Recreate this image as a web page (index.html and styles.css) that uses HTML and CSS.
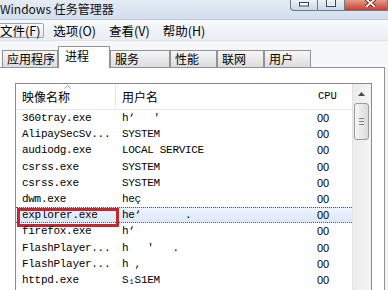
FILE: index.html
```html
<!DOCTYPE html>
<html lang="zh-CN">
<head>
<meta charset="utf-8">
<title>Windows 任务管理器</title>
<link rel="stylesheet" href="styles.css">
</head>
<body>
<div class="window">
  <div class="titlebar">
    <span class="title">Windows 任务管理器</span>
    <div class="controls">
      <span class="ctl ctl-min"><svg width="10" height="5" viewBox="0 0 10 5"><rect x="0.5" y="0.5" width="9" height="3.5" fill="#fff" stroke="#34465a"/></svg></span>
      <span class="ctl ctl-max"><svg width="10" height="7" viewBox="0 0 10 7"><rect x="0.5" y="-1" width="9" height="7.5" fill="none" stroke="#34465a"/><rect x="1.5" y="0" width="7" height="5.5" fill="none" stroke="#fff"/></svg></span>
      <span class="ctl ctl-close"><svg width="11" height="7" viewBox="0 0 11 7"><path d="M1 -1 L10 7 M10 -1 L1 7" stroke="#6a1d14" stroke-width="3.6"/><path d="M1 -1 L10 7 M10 -1 L1 7" stroke="#fff" stroke-width="1.8"/></svg></span>
    </div>
  </div>
  <div class="menubar">
    <span class="menu-item menu-item-open">文件(F)</span>
    <span class="menu-item">选项(O)</span>
    <span class="menu-item">查看(V)</span>
    <span class="menu-item">帮助(H)</span>
  </div>
  <div class="tabs">
    <span class="tab">应用程序</span>
    <span class="tab tab-active">进程</span>
    <span class="tab tab-wide">服务</span>
    <span class="tab">性能</span>
    <span class="tab">联网</span>
    <span class="tab">用户</span>
  </div>
  <div class="tabpage">
    <div class="listbox">
      <div class="list-main">
        <div class="row row-head">
          <span class="cell cell-head cell-sep">映像名称<svg class="sort-arrow" width="7" height="4" viewBox="0 0 7 4"><path d="M0.5 3.5 L3.5 0.5 L6.5 3.5" fill="none" stroke="#8a9bb0" stroke-width="1"/></svg></span>
          <span class="cell cell-head">用户名</span>
          <span class="cell cell-head cell-cpu-head">CPU</span>
        </div>
        <div class="row"><span class="cell">360tray.exe</span><span class="cell">h‘&nbsp;&nbsp;&nbsp;'</span><span class="cell cell-cpu">00</span></div>
        <div class="row"><span class="cell">AlipaySecSv...</span><span class="cell">SYSTEM</span><span class="cell cell-cpu">00</span></div>
        <div class="row"><span class="cell">audiodg.exe</span><span class="cell">LOCAL SERVICE</span><span class="cell cell-cpu">00</span></div>
        <div class="row"><span class="cell">csrss.exe</span><span class="cell">SYSTEM</span><span class="cell cell-cpu">00</span></div>
        <div class="row"><span class="cell">csrss.exe</span><span class="cell">SYSTEM</span><span class="cell cell-cpu">00</span></div>
        <div class="row"><span class="cell">dwm.exe</span><span class="cell">heç</span><span class="cell cell-cpu">00</span></div>
        <div class="row row-selected"><span class="cell">explorer.exe</span><span class="cell">he‘&nbsp;&nbsp;&nbsp;&nbsp;&nbsp;&nbsp;&nbsp;.</span><span class="cell cell-cpu">00</span><span class="annot"></span></div>
        <div class="row"><span class="cell">firefox.exe</span><span class="cell">h‘</span><span class="cell cell-cpu">00</span></div>
        <div class="row"><span class="cell">FlashPlayer...</span><span class="cell">h&nbsp;&nbsp;&nbsp;'&nbsp;&nbsp;&nbsp;.</span><span class="cell cell-cpu">00</span></div>
        <div class="row"><span class="cell">FlashPlayer...</span><span class="cell">h&nbsp;,</span><span class="cell cell-cpu">00</span></div>
        <div class="row"><span class="cell">httpd.exe</span><span class="cell">S₁S1EM</span><span class="cell cell-cpu">00</span></div>
      </div>
      <div class="scrollbar">
        <span class="scroll-up"><svg width="7" height="4" viewBox="0 0 7 4"><path d="M0 4 L3.5 0 L7 4 Z" fill="#4a4a4a"/></svg></span>
        <span class="scroll-thumb"><span class="grip"></span><span class="grip"></span><span class="grip"></span></span>
      </div>
    </div>
  </div>
</div>
</body>
</html>
```
FILE: styles.css
```css
* { box-sizing: border-box; }
html, body { margin: 0; padding: 0; }
body {
  width: 388px;
  height: 290px;
  overflow: hidden;
  background: #f2f3f5;
  font-family: "Noto Sans CJK SC", "Noto Sans", sans-serif;
  color: #000;
}
.window { width: 388px; height: 290px; display: flex; flex-direction: column; }

.titlebar {
  height: 20px;
  flex: none;
  display: flex;
  align-items: flex-start;
  background: linear-gradient(#e3ebf5, #d3dfed);
  border-bottom: 1px solid #b8c6d7;
}
.title {
  font-size: 12px;
  line-height: 17px;
  margin-left: 0;
  white-space: nowrap;
  word-spacing: 0;
  color: #111;
}
.controls { margin-left: auto; display: flex; height: 11px; }
.ctl {
  width: 28px;
  height: 11px;
  border: 1px solid #6c7a8c;
  border-top: none;
  background: linear-gradient(#edf2f8, #c8d6e7);
  display: flex;
  justify-content: center;
  align-items: flex-start;
  padding-top: 2px;
}
.ctl-min { border-radius: 0 0 0 4px; }
.ctl-max { width: 27px; border-left: none; padding-top: 0; }
.ctl-close {
  width: 43px;
  border-left: none;
  padding-top: 0;
  padding-left: 8px;
  background: linear-gradient(#e49a8c, #c9412f);
}

.menubar {
  height: 21px;
  flex: none;
  display: flex;
  align-items: center;
  gap: 5px;
  background: linear-gradient(#f8fafc, #e8edf4);
  border-bottom: 1px solid #dde2e9;
  font-size: 12.5px;
}
.menu-item {
  height: 15px;
  line-height: 13px;
  padding: 0 3px;
  border: 1px solid transparent;
  border-radius: 2px;
  white-space: nowrap;
}
.menu-item-open {
  margin-left: -4px;
  border-color: #9aa4b2;
  background: linear-gradient(#fdfdfe, #e6eaf0);
}

.tabs {
  height: 26px;
  flex: none;
  display: flex;
  align-items: flex-end;
  padding-left: 2px;
  background: #f6f7f8;
  font-size: 12px;
}
.tab {
  height: 17px;
  min-width: 47px;
  padding: 0 2px 0 4px;
  border: 1px solid #8f9298;
  border-bottom: none;
  background: linear-gradient(#f6f6f6, #dcdcdc);
  line-height: 16px;
  white-space: nowrap;
}
.tab-active {
  height: 22px;
  min-width: 52px;
  padding-left: 6px;
  padding-top: 1px;
  line-height: 15px;
  margin-bottom: -1px;
  background: #fff;
  position: relative;
  z-index: 1;
}
.tab-wide { min-width: 60px; }

.tabpage {
  flex: 1;
  width: 385px;
  background: #fff;
  border-top: 1px solid #8f9298;
  border-right: 1px solid #8f9298;
  padding: 15px 12px 0 15px;
}
.listbox {
  height: 100%;
  display: flex;
  border: 1px solid #858a93;
  border-bottom: none;
}
.list-main { flex: 1; }

.row {
  display: grid;
  grid-template-columns: 100px 194px 42px;
  height: 16.2px;
  font-family: "Liberation Mono", monospace;
  font-size: 11px;
  letter-spacing: -0.3px;
  line-height: 16px;
  position: relative;
}
.cell { padding-left: 6px; white-space: nowrap; overflow: hidden; }
.cell-cpu {
  padding-left: 7px;
  font-family: "Liberation Sans", sans-serif;
  font-size: 11px;
  letter-spacing: 0;
}
.row-head {
  height: 26px;
  line-height: 25px;
  border-bottom: 1px solid #e8ecf1;
}
.cell-head {
  font-family: "Noto Sans CJK SC", sans-serif;
  font-size: 12px;
  letter-spacing: 0;
  position: relative;
  overflow: visible;
}
.cell-sep { border-right: 1px solid #e4e6ea; }
.cell-cpu-head {
  font-family: "Liberation Mono", monospace;
  font-size: 10.5px;
  padding-left: 8px;
}
.sort-arrow { position: absolute; left: 48px; top: 1px; }

.row-selected {
  background: linear-gradient(#eef4fd, #dbe7f8);
  border-top: 1px dotted #555;
  border-bottom: 1px dotted #555;
  line-height: 14px;
}
.annot {
  position: absolute;
  left: 1px;
  top: 0;
  width: 102px;
  height: 19px;
  border: 3px solid #c4282e;
}

.scrollbar {
  width: 19px;
  flex: none;
  border-left: 1px solid #e2e2e2;
  background: linear-gradient(90deg, #ebebeb, #f5f5f5);
  display: flex;
  flex-direction: column;
  padding-left: 1px;
}
.scroll-up {
  height: 19px;
  display: flex;
  justify-content: center;
  align-items: flex-start;
  padding-top: 8px;
  padding-right: 2px;
}
.scroll-thumb {
  width: 15px;
  height: 37px;
  border: 1px solid #9a9a9a;
  border-radius: 3px;
  background: linear-gradient(90deg, #f6f6f6, #dadada);
  display: flex;
  flex-direction: column;
  align-items: center;
  justify-content: center;
  gap: 2px;
}
.grip { width: 5px; height: 1px; background: #7d8590; }
```
